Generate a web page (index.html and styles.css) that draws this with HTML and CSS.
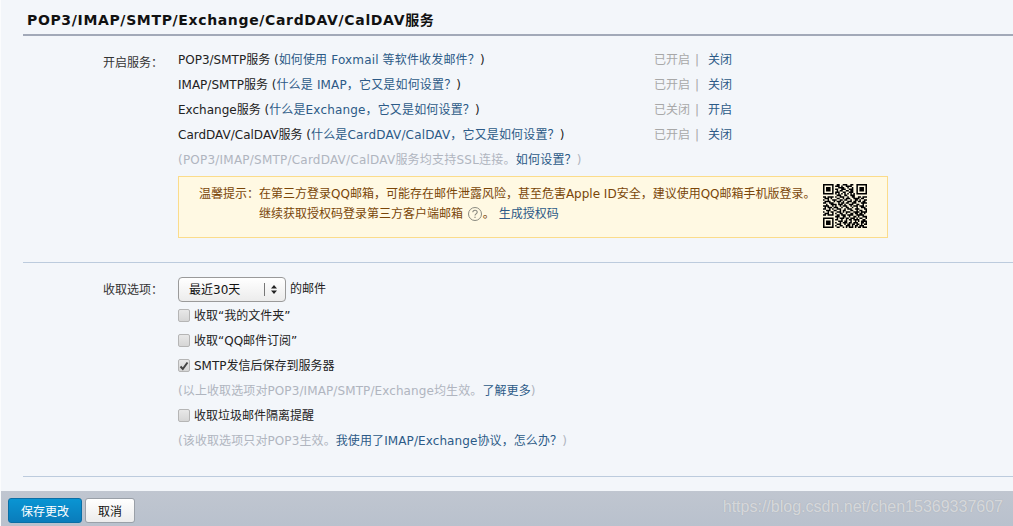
FILE: index.html
```html
<!DOCTYPE html>
<html lang="zh">
<head>
<meta charset="utf-8">
<title>POP3/IMAP/SMTP/Exchange/CardDAV/CalDAV服务</title>
<link rel="stylesheet" href="styles.css">
</head>
<body>
<main class="page">
  <h2 class="title">POP3/IMAP/SMTP/Exchange/CardDAV/CalDAV服务</h2>

  <section class="section section-services">
    <div class="label label-services">开启服务&#xFF1A;</div>
    <div class="content">
      <div class="service"><div class="service-name">POP3/SMTP服务 (<a>如何使用 Foxmail 等软件收发邮件&#xFF1F;</a>)</div><div class="status"><span class="state">已开启</span><span class="sep">|</span><a>关闭</a></div></div>
      <div class="service"><div class="service-name">IMAP/SMTP服务 (<a>什么是 IMAP&#xFF0C;它又是如何设置&#xFF1F;</a>)</div><div class="status"><span class="state">已开启</span><span class="sep">|</span><a>关闭</a></div></div>
      <div class="service"><div class="service-name">Exchange服务 (<a>什么是Exchange&#xFF0C;它又是如何设置&#xFF1F;</a>)</div><div class="status"><span class="state">已关闭</span><span class="sep">|</span><a>开启</a></div></div>
      <div class="service"><div class="service-name">CardDAV/CalDAV服务 (<a>什么是CardDAV/CalDAV&#xFF0C;它又是如何设置&#xFF1F;</a>)</div><div class="status"><span class="state">已开启</span><span class="sep">|</span><a>关闭</a></div></div>
      <div class="service muted">(POP3/IMAP/SMTP/CardDAV/CalDAV服务均支持SSL连接。<a>如何设置&#xFF1F;</a>)</div>

      <div class="notice">
        <div class="notice-label">温馨提示&#xFF1A;</div>
        <div class="notice-text">
          <div>在第三方登录QQ邮箱&#xFF0C;可能存在邮件泄露风险&#xFF0C;甚至危害Apple ID安全&#xFF0C;建议使用QQ邮箱手机版登录。</div>
          <div>继续获取授权码登录第三方客户端邮箱 <svg class="help" width="16" height="16" viewBox="0 0 16 16"><circle cx="8" cy="8" r="6.5" fill="none" stroke="#8a8a80" stroke-width="1"/><path d="M5.8 6.3c0-1.4 1-2.1 2.2-2.1s2.2.8 2.2 2c0 1.700-2.200 1.700-2.200 3.400" fill="none" stroke="#8a8a80" stroke-width="1.100"/><rect x="7.400" y="10.700" width="1.200" height="1.200" fill="#8a8a80"/></svg>。<a class="gen">生成授权码</a></div>
        </div>
        <svg class="qr" width="44" height="44" viewBox="0 0 29 29"><path fill="none" stroke="#000" stroke-width="1" d="M0 .5h7M9 .5h2M13 .5h3M18 .5h2M22 .5h7M0 1.500h1M6 1.500h1M8 1.500h3M12 1.500h1M15 1.500h4M22 1.500h1M28 1.500h1M0 2.500h1M2 2.500h3M6 2.500h1M10 2.500h4M16 2.500h1M19 2.500h1M22 2.500h1M24 2.500h3M28 2.500h1M0 3.500h1M2 3.500h3M6 3.500h1M8 3.500h2M12 3.500h3M17 3.500h3M22 3.500h1M24 3.500h3M28 3.500h1M0 4.500h1M2 4.500h3M6 4.500h1M9 4.500h1M11 4.500h2M15 4.500h2M18 4.500h2M22 4.500h1M24 4.500h3M28 4.500h1M0 5.500h1M6 5.500h1M8 5.500h3M13 5.500h2M17 5.500h3M22 5.500h1M28 5.500h1M0 6.500h7M8 6.500h1M10 6.500h1M12 6.500h1M14 6.500h1M16 6.500h1M18 6.500h1M20 6.500h1M22 6.500h7M9 7.500h3M14 7.500h2M18 7.500h3M0 8.500h2M3 8.500h4M8 8.500h1M11 8.500h3M16 8.500h1M19 8.500h2M23 8.500h2M26 8.500h3M1 9.500h3M5 9.500h1M9 9.500h2M13 9.500h1M15 9.500h3M20 9.500h4M25 9.500h2M0 10.500h1M3 10.500h1M6 10.500h3M11 10.500h2M14 10.500h2M18 10.500h1M21 10.500h2M24 10.500h1M27 10.500h2M1 11.500h4M7 11.500h1M9 11.500h3M13 11.500h1M16 11.500h3M20 11.500h2M23 11.500h2M26 11.500h2M0 12.500h2M4 12.500h3M10 12.500h1M12 12.500h2M15 12.500h2M19 12.500h3M25 12.500h4M2 13.500h1M5 13.500h4M10 13.500h3M14 13.500h1M17 13.500h3M22 13.500h2M26 13.500h1M0 14.500h4M6 14.500h1M8 14.500h1M11 14.500h1M13 14.500h3M18 14.500h1M20 14.500h3M24 14.500h3M28 14.500h1M1 15.500h1M3 15.500h3M7 15.500h3M12 15.500h1M15 15.500h2M19 15.500h1M22 15.500h1M25 15.500h3M0 16.500h2M4 16.500h1M6 16.500h1M9 16.500h3M14 16.500h1M16 16.500h3M21 16.500h3M27 16.500h2M2 17.500h3M7 17.500h2M11 17.500h1M13 17.500h2M18 17.500h2M22 17.500h1M24 17.500h2M28 17.500h1M0 18.500h1M3 18.500h1M5 18.500h2M9 18.500h3M13 18.500h1M15 18.500h3M20 18.500h4M25 18.500h4M1 19.500h3M6 19.500h1M8 19.500h1M11 19.500h2M15 19.500h1M18 19.500h2M21 19.500h2M24 19.500h2M27 19.500h1M0 20.500h2M3 20.500h4M9 20.500h2M12 20.500h3M16 20.500h4M22 20.500h5M8 21.500h3M13 21.500h2M17 21.500h1M20 21.500h2M23 21.500h1M26 21.500h3M0 22.500h7M9 22.500h1M11 22.500h3M15 22.500h2M18 22.500h3M22 22.500h1M24 22.500h2M28 22.500h1M0 23.500h1M6 23.500h1M8 23.500h2M12 23.500h1M15 23.500h1M17 23.500h2M20 23.500h4M26 23.500h2M0 24.500h1M2 24.500h3M6 24.500h1M10 24.500h3M14 24.500h2M18 24.500h1M21 24.500h1M23 24.500h1M25 24.500h4M0 25.500h1M2 25.500h3M6 25.500h1M8 25.500h1M11 25.500h1M13 25.500h3M17 25.500h2M20 25.500h3M25 25.500h2M28 25.500h1M0 26.500h1M2 26.500h3M6 26.500h1M9 26.500h3M14 26.500h1M16 26.500h2M19 26.500h2M22 26.500h2M25 26.500h1M27 26.500h2M0 27.500h1M6 27.500h1M8 27.500h1M11 27.500h2M15 27.500h3M19 27.500h1M21 27.500h2M24 27.500h3M0 28.500h7M9 28.500h2M13 28.500h1M15 28.500h1M17 28.500h3M21 28.500h1M23 28.500h2M26 28.500h3"/></svg>
      </div>
    </div>
  </section>

  <section class="section section-options">
    <div class="label label-options">收取选项&#xFF1A;</div>
    <div class="content">
      <div class="select-row">
        <div class="select"><span class="select-value">最近30天</span><span class="select-arrows"><svg width="6" height="9" viewBox="0 0 6 9"><path d="M3 0l3 3.500H0zM3 9L0 5.500h6z" fill="#222"/></svg></span></div>
        <span>的邮件</span>
      </div>
      <div class="option"><span class="checkbox"></span>收取“我的文件夹”</div>
      <div class="option"><span class="checkbox"></span>收取“QQ邮件订阅”</div>
      <div class="option"><span class="checkbox"><svg width="10" height="10" viewBox="0 0 10 10"><path d="M1.500 5.500l2.300 2.500L8.500 1.500" fill="none" stroke="#444" stroke-width="2"/></svg></span>SMTP发信后保存到服务器</div>
      <div class="option muted">(以上收取选项对POP3/IMAP/SMTP/Exchange均生效。<a>了解更多</a>)</div>
      <div class="option"><span class="checkbox"></span>收取垃圾邮件隔离提醒</div>
      <div class="option muted">(该收取选项只对POP3生效。<a>我使用了IMAP/Exchange协议&#xFF0C;怎么办&#xFF1F;</a>)</div>
    </div>
  </section>
</main>

<footer class="footer">
  <button class="btn btn-primary" type="button">保存更改</button>
  <button class="btn btn-default" type="button">取消</button>
  <div class="watermark">https://blog.csdn.net/chen15369337607</div>
</footer>
</body>
</html>
```

FILE: styles.css
```css
* { box-sizing: border-box; }

html, body { margin: 0; padding: 0; }

body {
  width: 1013px;
  height: 526px;
  overflow: hidden;
  display: flex;
  flex-direction: column;
  background: #f3f6fa;
  border-left: 1px solid #fbfcfd;
  color: #222;
  font: 12px/25px "DejaVu Sans", "Noto Sans CJK SC", sans-serif;
}

a { color: #2c5a87; }

.page {
  flex: 1;
  padding-left: 22px;
}

.title {
  margin: 0;
  height: 36px;
  padding: 9px 0 0 4px;
  font-size: 14px;
  line-height: 22px;
  font-weight: bold;
  letter-spacing: 0.65px;
  color: #111;
  border-bottom: 2px solid #a2a9b8;
}

.section {
  display: flex;
  border-bottom: 1px solid #bccbdd;
}

.section-services { height: 227px; padding-top: 12px; }
.section-options { height: 214px; padding-top: 14px; }

.label {
  width: 140px;
  margin-right: 15px;
  text-align: right;
  color: #333;
  flex: none;
}

.label-services { padding-top: 3px; }
.label-options { padding-top: 1px; }

.content { flex: 1; }

.service { display: flex; height: 25px; }

.service-name { width: 476px; flex: none; }

.service-name a { letter-spacing: 0.16px; }

.status { display: flex; color: #a8a8a8; }

.sep { margin: 0 9px 0 5px; }

.muted { color: #b0b5bf; }

.service.muted { letter-spacing: 0.22px; }

.option.muted { letter-spacing: 0.1px; }

.notice {
  display: flex;
  width: 710px;
  height: 62px;
  margin-top: 3px;
  padding: 7px 20px 0 20px;
  background: #fff9e3;
  border: 1px solid #fbdc8b;
  color: #7a4608;
  line-height: 20px;
}

.notice-label { width: 60px; flex: none; }

.notice-text { flex: 1; white-space: nowrap; }

.help { vertical-align: -4px; }

.gen { margin-left: 4px; }

.qr { flex: none; margin-top: 0; }

.select-row { display: flex; align-items: flex-start; height: 27px; line-height: 24px; }

.select-row > span { margin-left: 4px; }

.select {
  display: flex;
  align-items: center;
  width: 108px;
  height: 25px;
  border: 1px solid #9a9a9a;
  border-radius: 4px;
  background: linear-gradient(#ffffff, #ececec);
  color: #111;
}

.select-value { width: 85px; padding-left: 10px; }

.select-arrows {
  display: flex;
  align-items: center;
  justify-content: center;
  flex: 1;
  height: 13px;
  margin-right: 3px;
  border-left: 1px solid #777;
}

.option { display: flex; align-items: center; height: 25px; }

.option.muted { display: block; }

.checkbox {
  display: flex;
  align-items: center;
  justify-content: center;
  width: 12px;
  height: 13px;
  margin: 0 4px 2px 0;
  border: 1px solid #b5b5b5;
  border-radius: 2px;
  background: linear-gradient(#e8e8e8, #d6d6d6);
}

.footer {
  position: relative;
  display: flex;
  flex: none;
  align-items: flex-start;
  gap: 3px;
  height: 35px;
  padding: 7px 0 0 7px;
  background: linear-gradient(#c0c6d0, #b9c1cd);
}

.btn {
  height: 25px;
  padding: 2px 0 0;
  border-radius: 3px;
  font: 12px/20px "DejaVu Sans", "Noto Sans CJK SC", sans-serif;
}

.btn-primary {
  width: 74px;
  color: #fff;
  border: 1px solid #0a6ea5;
  background: linear-gradient(#0a95d3, #0a7cbb);
}

.btn-default {
  width: 50px;
  color: #111;
  border: 1px solid #9aa0a8;
  background: linear-gradient(#ffffff, #ececec);
}

.watermark {
  position: absolute;
  right: 10px;
  top: 5px;
  font: 16px/22px "Liberation Sans", sans-serif;
  color: rgba(255, 255, 255, 0.55);
  text-shadow: 0 0 1px rgba(120, 120, 120, 0.4);
}
```
